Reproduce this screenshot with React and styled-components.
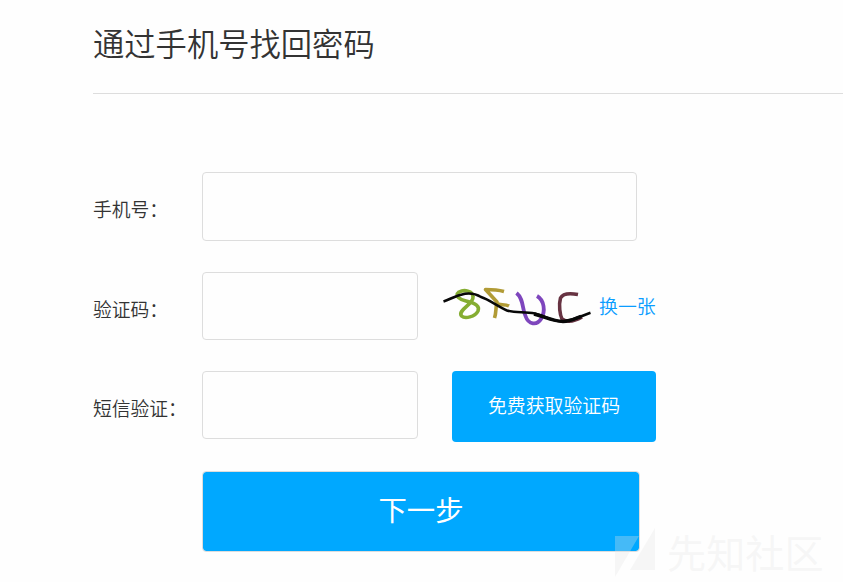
import React from "react";
import styled, { createGlobalStyle } from "styled-components";

const GlobalStyle = createGlobalStyle`
  * { box-sizing: border-box; }
  body {
    margin: 0;
    overflow: hidden;
    background: #fefefe;
    color: #333;
    font-family: "Noto Sans CJK SC", sans-serif;
  }
`;

const Page = styled.main`
  position: relative;
  height: 582px;
  padding-left: 93px;
  overflow: hidden;
`;

const Title = styled.h1`
  height: 94px;
  margin: 0;
  padding-top: 20px;
  border-bottom: 1px solid #ddd;
  font-size: 31.3px;
  font-weight: 350;
  line-height: 46px;
`;

const Form = styled.form`
  display: flex;
  flex-direction: column;
  padding-top: 78px;
`;

const Row = styled.div`
  display: flex;
  align-items: flex-start;
  height: ${(p) => p.$height}px;
`;

const Label = styled.label`
  width: 109px;
  padding-top: 23px;
  font-size: 18.8px;
  font-weight: 350;
  line-height: 28px;
  white-space: nowrap;
`;

const Input = styled.input`
  width: ${(p) => (p.$wide ? 435 : 216)}px;
  height: ${(p) => (p.$wide ? 69 : 68)}px;
  padding: 0 16px;
  border: 1px solid #ddd;
  border-radius: 4px;
  background: #fefefe;
  font: inherit;
  outline: none;
`;

const Captcha = styled.svg`
  width: 156px;
  height: 50px;
  margin: 9px 0 0 21px;
`;

const RefreshLink = styled.a`
  margin: 20px 0 0 4px;
  color: #0b9dff;
  font-size: 18.9px;
  font-weight: 350;
  line-height: 28px;
  text-decoration: none;
`;

const Button = styled.button`
  padding: 0;
  border: 0;
  border-radius: 4px;
  background: #00a8ff;
  color: #fff;
  font-family: inherit;
`;

const CodeButton = styled(Button)`
  width: 204px;
  height: 71px;
  margin-left: 34px;
  padding-bottom: 5px;
  font-size: 18.9px;
  font-weight: 350;
`;

const NextButton = styled(Button)`
  width: 438px;
  height: 81px;
  margin-left: 109px;
  padding-bottom: 6px;
  border: 1px solid #ddd;
  background-clip: padding-box;
  font-size: 28.4px;
`;

const Watermark = styled.div`
  position: absolute;
  left: 615px;
  top: 528px;
  display: flex;
  color: rgba(228, 228, 228, 0.3);
  font-size: 39.2px;
  line-height: 46px;
  pointer-events: none;
`;

const WatermarkLogo = styled.svg`
  width: 40px;
  height: 50px;
  margin-right: 12px;
  fill: currentColor;
`;

export default function App() {
  return (
    <>
      <GlobalStyle />
      <Page>
        <Title>通过手机号找回密码</Title>
        <Form onSubmit={(e) => e.preventDefault()}>
          <Row $height={100}>
            <Label htmlFor="phone">手机号：</Label>
            <Input id="phone" $wide />
          </Row>
          <Row $height={99}>
            <Label htmlFor="captcha">验证码：</Label>
            <Input id="captcha" />
            <Captcha viewBox="439 281 156 50" fill="none" strokeLinecap="butt" strokeLinejoin="round">
              <path d="M473 297C473 290.5 464 289.5 459 292C454 296 460 299.5 466 301C476 303.5 480 306 478 311C475 317 465 319 461.5 316C457 310 474 304 473 297Z" stroke="#85ad32" strokeWidth="3.6" />
              <path d="M504 291.5C497 289.5 491 289.5 485.5 289.5L497 302C495.5 307 496.5 312 494.5 318M496 303C500 306 504 303.5 509 306" stroke="#b19b36" strokeWidth="3.6" />
              <path d="M516.5 293C524 299 522 309 525.5 316C528.5 325 537 325.5 541 319C546 311 544 300 537 296" stroke="#7e46bd" strokeWidth="3.8" />
              <path d="M578 294.5C570 293 563 293 560.5 298C558.5 305 560 315 562 319C567 322.5 575 321 582 317" stroke="#673342" strokeWidth="3.6" />
              <path d="M443.5 301.5C451 299 455 295.5 465 293.7C470 293 476 293.8 481 297C489 299.5 497 306 507 310.5C516 313 524 311.5 535 313.5C545 316 552 321 561 321.5C572 321.5 581 316 590.5 312.7" stroke="#080808" strokeWidth="2.6" />
              <path d="M534 314C545 317 554 321.5 563 321.5C571 321.5 576 318 581 316.5" stroke="#080808" strokeWidth="3.5" />
            </Captcha>
            <RefreshLink href="#">换一张</RefreshLink>
          </Row>
          <Row $height={100}>
            <Label htmlFor="sms">短信验证：</Label>
            <Input id="sms" />
            <CodeButton type="button">免费获取验证码</CodeButton>
          </Row>
          <NextButton type="submit">下一步</NextButton>
        </Form>
        <Watermark>
          <WatermarkLogo viewBox="0 0 40 50" aria-hidden="true">
            <path d="M0 8H24L0 49ZM40 0V42H15Z" />
          </WatermarkLogo>
          先知社区
        </Watermark>
      </Page>
    </>
  );
}
